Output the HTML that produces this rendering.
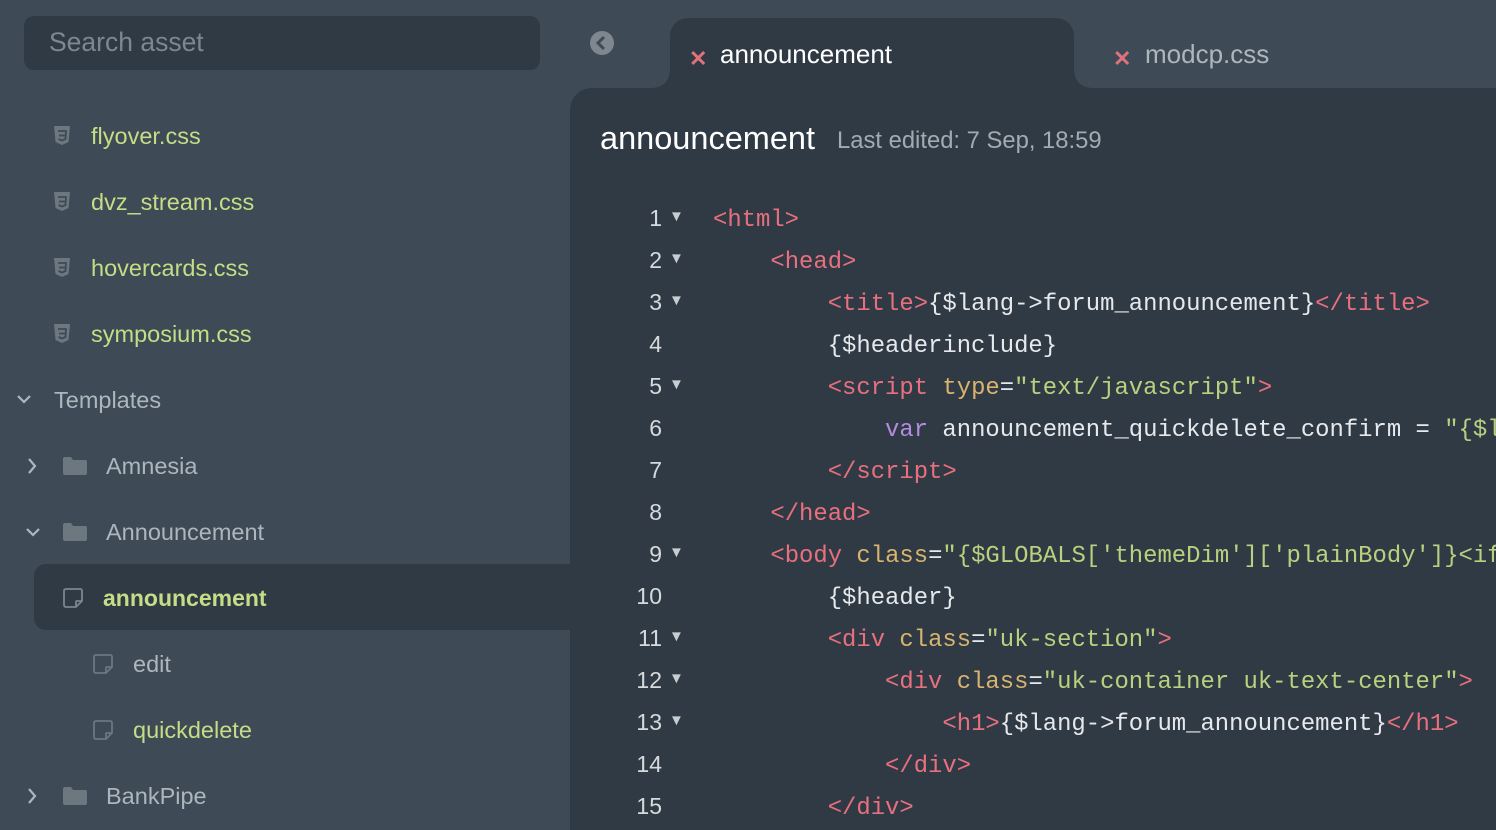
<!DOCTYPE html>
<html><head><meta charset="utf-8"><style>
*{margin:0;padding:0;box-sizing:border-box}
body{width:1496px;height:830px;background:#3e4a55;overflow:hidden;position:relative;font-family:"Liberation Sans",sans-serif}
.search{position:absolute;left:24px;top:16px;width:516px;height:54px;background:#2f3a45;border-radius:10px;color:#7e878f;font-size:26.5px;padding:11px 0 0 25px}
.item{position:absolute;font-size:23.5px;height:30px;line-height:30px;white-space:nowrap}
.g{color:#c5dd86}.w{color:#aeb6bd}
.sel{position:absolute;left:34px;top:564px;width:540px;height:66px;background:#2f3a45;border-radius:12px 0 0 12px}
.ico{position:absolute}
.editor{position:absolute;left:570px;top:88px;width:926px;height:742px;background:#303a45;border-radius:22px 0 0 0;overflow:hidden}
.tab{position:absolute;left:670px;top:18px;width:404px;height:80px;background:#303a45;border-radius:18px 18px 0 0}
.corner{position:absolute;width:20px;height:20px}
.tabtxt{position:absolute;font-size:26px;white-space:nowrap}
.x{color:#e0727d;font-weight:bold;font-size:22px}
.code{position:absolute;left:0;top:0;font-family:"Liberation Mono",monospace;font-size:23.9px;white-space:pre;color:#e6e9ec}
.ln{position:absolute;width:92px;text-align:right;color:#d6dadd;font-family:"Liberation Sans",sans-serif;font-size:23px}
.tri{position:absolute;color:#c9cdd1;font-size:15px}
.t{color:#e8707e}.a{color:#d9b46e}.s{color:#b9d17f}.v{color:#b58ae0}
</style></head><body>
<div class="search">Search asset</div>

<svg class="ico" style="left:53px;top:126px" width="18" height="20" viewBox="0 0 18 20"><path d="M1 0h16l-1.5 16L9 19 2.5 16z" fill="#6d7780"/><path d="M5 5h8l-.5 8L9 14.5 5.5 13" fill="none" stroke="#3e4a55" stroke-width="1.8"/><path d="M6 9.5h6" stroke="#3e4a55" stroke-width="1.8"/></svg>
<div class="item g" style="left:91px;top:121px">flyover.css</div>
<svg class="ico" style="left:53px;top:192px" width="18" height="20" viewBox="0 0 18 20"><path d="M1 0h16l-1.5 16L9 19 2.5 16z" fill="#6d7780"/><path d="M5 5h8l-.5 8L9 14.5 5.5 13" fill="none" stroke="#3e4a55" stroke-width="1.8"/><path d="M6 9.5h6" stroke="#3e4a55" stroke-width="1.8"/></svg>
<div class="item g" style="left:91px;top:187px">dvz_stream.css</div>
<svg class="ico" style="left:53px;top:258px" width="18" height="20" viewBox="0 0 18 20"><path d="M1 0h16l-1.5 16L9 19 2.5 16z" fill="#6d7780"/><path d="M5 5h8l-.5 8L9 14.5 5.5 13" fill="none" stroke="#3e4a55" stroke-width="1.8"/><path d="M6 9.5h6" stroke="#3e4a55" stroke-width="1.8"/></svg>
<div class="item g" style="left:91px;top:253px">hovercards.css</div>
<svg class="ico" style="left:53px;top:324px" width="18" height="20" viewBox="0 0 18 20"><path d="M1 0h16l-1.5 16L9 19 2.5 16z" fill="#6d7780"/><path d="M5 5h8l-.5 8L9 14.5 5.5 13" fill="none" stroke="#3e4a55" stroke-width="1.8"/><path d="M6 9.5h6" stroke="#3e4a55" stroke-width="1.8"/></svg>
<div class="item g" style="left:91px;top:319px">symposium.css</div>

<svg class="ico" style="left:16px;top:393px" width="16" height="12"><path d="M2 3l6 6 6-6" fill="none" stroke="#aeb6bd" stroke-width="2.2"/></svg>
<div class="item w" style="left:54px;top:385px">Templates</div>

<svg class="ico" style="left:26px;top:457px" width="12" height="18"><path d="M3 2l6 7-6 7" fill="none" stroke="#aeb6bd" stroke-width="2.2"/></svg>
<svg class="ico" style="left:63px;top:457px" width="24" height="18"><path d="M0 2q0-2 2-2h6l2 3h12q2 0 2 2v11q0 2-2 2H2q-2 0-2-2z" fill="#6d7780"/></svg>
<div class="item w" style="left:106px;top:451px">Amnesia</div>

<svg class="ico" style="left:25px;top:526px" width="16" height="12"><path d="M2 3l6 6 6-6" fill="none" stroke="#aeb6bd" stroke-width="2.2"/></svg>
<svg class="ico" style="left:63px;top:523px" width="24" height="18"><path d="M0 2q0-2 2-2h6l2 3h12q2 0 2 2v11q0 2-2 2H2q-2 0-2-2z" fill="#6d7780"/></svg>
<div class="item w" style="left:106px;top:517px">Announcement</div>

<div class="sel"></div>
<svg class="ico" style="left:63px;top:588px" width="20" height="20"><path d="M3 1h14q2 0 2 2v10l-6 6H3q-2 0-2-2V3q0-2 2-2z M19 13h-5q-1 0-1 1v5" fill="none" stroke="#7c858d" stroke-width="1.8"/></svg>
<div class="item g" style="left:103px;top:583px;font-weight:bold;font-size:23px">announcement</div>

<svg class="ico" style="left:93px;top:654px" width="20" height="20"><path d="M3 1h14q2 0 2 2v10l-6 6H3q-2 0-2-2V3q0-2 2-2z M19 13h-5q-1 0-1 1v5" fill="none" stroke="#6d7780" stroke-width="1.8"/></svg>
<div class="item w" style="left:133px;top:649px">edit</div>
<svg class="ico" style="left:93px;top:720px" width="20" height="20"><path d="M3 1h14q2 0 2 2v10l-6 6H3q-2 0-2-2V3q0-2 2-2z M19 13h-5q-1 0-1 1v5" fill="none" stroke="#6d7780" stroke-width="1.8"/></svg>
<div class="item g" style="left:133px;top:715px">quickdelete</div>

<svg class="ico" style="left:26px;top:787px" width="12" height="18"><path d="M3 2l6 7-6 7" fill="none" stroke="#aeb6bd" stroke-width="2.2"/></svg>
<svg class="ico" style="left:63px;top:787px" width="24" height="18"><path d="M0 2q0-2 2-2h6l2 3h12q2 0 2 2v11q0 2-2 2H2q-2 0-2-2z" fill="#6d7780"/></svg>
<div class="item w" style="left:106px;top:781px">BankPipe</div>

<svg class="ico" style="left:590px;top:31px" width="24" height="24"><circle cx="12" cy="12" r="12" fill="#7e878f"/><path d="M14 6l-6 6 6 6" fill="none" stroke="#3e4a55" stroke-width="3"/></svg>

<div class="editor">
<div style="position:absolute;left:30px;top:32px;font-size:32.5px;color:#fff;white-space:nowrap">announcement</div>
<div style="position:absolute;left:267px;top:39px;font-size:23.8px;color:#a3abb2;white-space:nowrap">Last edited: 7 Sep, 18:59</div>
<div class="ln" style="left:0;top:109px;line-height:42px">1<br>2<br>3<br>4<br>5<br>6<br>7<br>8<br>9<br>10<br>11<br>12<br>13<br>14<br>15</div>
<div class="tri" style="left:99px;top:120px">▼</div>
<div class="tri" style="left:99px;top:162px">▼</div>
<div class="tri" style="left:99px;top:204px">▼</div>
<div class="tri" style="left:99px;top:288px">▼</div>
<div class="tri" style="left:99px;top:456px">▼</div>
<div class="tri" style="left:99px;top:540px">▼</div>
<div class="tri" style="left:99px;top:582px">▼</div>
<div class="tri" style="left:99px;top:624px">▼</div>
<div class="code" style="left:143px;top:112px;line-height:42px"><span class="t">&lt;html&gt;</span>
    <span class="t">&lt;head&gt;</span>
        <span class="t">&lt;title&gt;</span>{$lang-&gt;forum_announcement}<span class="t">&lt;/title&gt;</span>
        {$headerinclude}
        <span class="t">&lt;script</span> <span class="a">type</span>=<span class="s">"text/javascript"</span><span class="t">&gt;</span>
            <span class="v">var</span> announcement_quickdelete_confirm = <span class="s">"{$lang-&gt;</span>
        <span class="t">&lt;/script&gt;</span>
    <span class="t">&lt;/head&gt;</span>
    <span class="t">&lt;body</span> <span class="a">class</span>=<span class="s">"{$GLOBALS['themeDim']['plainBody']}&lt;if</span>
        {$header}
        <span class="t">&lt;div</span> <span class="a">class</span>=<span class="s">"uk-section"</span><span class="t">&gt;</span>
            <span class="t">&lt;div</span> <span class="a">class</span>=<span class="s">"uk-container uk-text-center"</span><span class="t">&gt;</span>
                <span class="t">&lt;h1&gt;</span>{$lang-&gt;forum_announcement}<span class="t">&lt;/h1&gt;</span>
            <span class="t">&lt;/div&gt;</span>
        <span class="t">&lt;/div&gt;</span></div>
</div>

<div class="tab"></div>
<svg class="corner" style="left:650px;top:68px"><path d="M0 20Q20 20 20 0V20z" fill="#303a45"/></svg>
<svg class="corner" style="left:1074px;top:68px"><path d="M20 20Q0 20 0 0V20z" fill="#303a45"/></svg>
<div class="tabtxt" style="left:689px;top:42px"><span class="x">✕</span></div>
<div class="tabtxt" style="left:720px;top:39px;color:#fff">announcement</div>
<div class="tabtxt" style="left:1113px;top:42px"><span class="x">✕</span></div>
<div class="tabtxt" style="left:1145px;top:39px;color:#aeb6bd">modcp.css</div>
</body></html>
